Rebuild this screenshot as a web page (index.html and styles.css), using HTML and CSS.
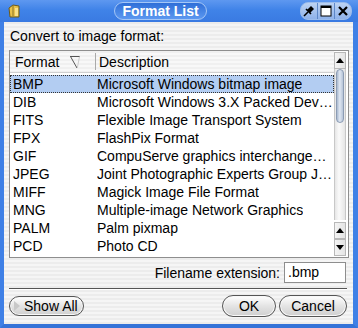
FILE: index.html
```html
<!DOCTYPE html>
<html lang="en">
<head>
    <meta charset="UTF-8">
    <title>Format List</title>
    <link rel="stylesheet" href="styles.css">
</head>
<body>
    <div class="window">
        <div class="titlebar">
            <svg class="app-icon" width="14" height="14" viewBox="0 0 14 14">
                <path d="M2 4 L6 1 L12 2 L12 13 L3 13 Z" fill="#e8c14a" stroke="#6b5a1e" stroke-width="1"/>
                <path d="M6 1 L6 12" stroke="#8a7426" stroke-width="1"/>
                <rect x="8" y="4" width="3" height="8" fill="#f7e08a"/>
            </svg>
            <div class="title-wrap">
                <div class="title">Format List</div>
            </div>
            <div class="win-buttons">
                <span class="wbtn">
                    <svg width="12" height="12" viewBox="0 0 12 12">
                        <path d="M1 11 L5 7" stroke="#000" stroke-width="1.6"/>
                        <path d="M4 5 L7 8 L11 4 L8 1 Z" fill="#000"/>
                        <path d="M3 4 L8 9" stroke="#000" stroke-width="1.6"/>
                    </svg>
                </span>
                <span class="wbtn">
                    <svg width="12" height="12" viewBox="0 0 12 12">
                        <rect x="1" y="1" width="10" height="10" fill="#fff" stroke="#000" stroke-width="1"/>
                        <rect x="1" y="1" width="10" height="2" fill="#000"/>
                    </svg>
                </span>
                <span class="wbtn">
                    <svg width="12" height="12" viewBox="0 0 12 12">
                        <path d="M2 2 L10 10 M10 2 L2 10" stroke="#000" stroke-width="2.2"/>
                    </svg>
                </span>
            </div>
        </div>

        <div class="content">
            <div class="label">Convert to image format:</div>

            <div class="list">
                <div class="list-main">
                    <div class="list-header">
                        <div class="col-format">Format
                            <svg class="sort" width="12" height="14" viewBox="0 0 12 14">
                                <path d="M1 1.5 L11 1.5" stroke="#555" stroke-width="1"/>
                                <path d="M1.5 1.5 L8 13" stroke="#555" stroke-width="1"/>
                                <path d="M10.5 1.5 L8.5 12" stroke="#ccc" stroke-width="1"/>
                            </svg>
                        </div>
                        <div class="col-desc">Description</div>
                    </div>
                    <div class="rows">
                        <div class="row selected"><span class="c1">BMP</span><span class="c2">Microsoft Windows bitmap image</span></div>
                        <div class="row"><span class="c1">DIB</span><span class="c2">Microsoft Windows 3.X Packed Dev…</span></div>
                        <div class="row"><span class="c1">FITS</span><span class="c2">Flexible Image Transport System</span></div>
                        <div class="row"><span class="c1">FPX</span><span class="c2">FlashPix Format</span></div>
                        <div class="row"><span class="c1">GIF</span><span class="c2">CompuServe graphics interchange…</span></div>
                        <div class="row"><span class="c1">JPEG</span><span class="c2">Joint Photographic Experts Group J…</span></div>
                        <div class="row"><span class="c1">MIFF</span><span class="c2">Magick Image File Format</span></div>
                        <div class="row"><span class="c1">MNG</span><span class="c2">Multiple-image Network Graphics</span></div>
                        <div class="row"><span class="c1">PALM</span><span class="c2">Palm pixmap</span></div>
                        <div class="row"><span class="c1">PCD</span><span class="c2">Photo CD</span></div>
                    </div>
                </div>
                <div class="scrollbar">
                    <div class="sb-btn"><span class="arrow-up"></span></div>
                    <div class="sb-track">
                        <div class="sb-thumb"></div>
                    </div>
                    <div class="sb-btn"><span class="arrow-up"></span></div>
                    <div class="sb-btn"><span class="arrow-down"></span></div>
                </div>
            </div>

            <div class="ext-row">
                <span>Filename extension:</span>
                <div class="ext-input">.bmp</div>
            </div>

            <div class="separator"></div>

            <div class="buttons">
                <div class="btn show-all"><span class="tri"></span>Show All</div>
                <div class="spacer"></div>
                <div class="btn ok">OK</div>
                <div class="btn cancel">Cancel</div>
            </div>
        </div>
    </div>
</body>
</html>
```

FILE: styles.css
```css
body {
    margin: 0;
    font-family: "Liberation Sans", Arial, sans-serif;
    font-size: 14px;
    color: #000;
}
.window {
    width: 358px;
    height: 328px;
    box-sizing: border-box;
    background: #3d7be0;
    border-left: 4px solid #3f80e6;
    border-right: 5px solid #3f80e6;
    border-bottom: 4px solid #3573d8;
    display: flex;
    flex-direction: column;
}
.titlebar {
    height: 22px;
    display: flex;
    align-items: center;
    background: linear-gradient(#5e98f0, #4083e8 45%, #3a7ae2);
    margin: 0 -5px 0 -4px;
    padding: 0 6px 0 7px;
}
.app-icon {
    flex: none;
}
.title-wrap {
    flex: 1;
    display: flex;
    justify-content: center;
}
.title {
    color: #fff;
    font-weight: bold;
    font-size: 14px;
    padding: 0 7px;
    height: 16px;
    line-height: 16px;
    border-radius: 9px;
    background: linear-gradient(#2f6fd8, #5c98f0);
    border: 1px solid #a4c6f6;
}
.win-buttons {
    display: flex;
    height: 16px;
    border-radius: 8px;
    overflow: hidden;
    border: 1px solid #9cbcec;
    background: linear-gradient(#bcd2f2, #8fb2ea);
}
.wbtn {
    width: 16px;
    height: 16px;
    display: flex;
    align-items: center;
    justify-content: center;
    border-left: 1px solid #5d87c8;
}
.wbtn:first-child {
    border-left: none;
}
.content {
    flex: 1;
    background: repeating-linear-gradient(#ececec 0, #ececec 2px, #f5f5f5 2px, #f5f5f5 4px);
    padding: 6px 4px 0 5px;
    display: flex;
    flex-direction: column;
}
.label {
    height: 16px;
    line-height: 16px;
    padding-left: 1px;
    margin-bottom: 6px;
}
.list {
    height: 208px;
    box-sizing: border-box;
    border: 1px solid #8e8e8e;
    background: #fff;
    display: flex;
}
.list-main {
    flex: 1;
    display: flex;
    flex-direction: column;
}
.list-header {
    height: 21px;
    display: flex;
    align-items: center;
    background: repeating-linear-gradient(#f0f0f0 0, #f0f0f0 2px, #f8f8f8 2px, #f8f8f8 4px);
    border-bottom: 1px solid #d0d0d0;
    margin-bottom: 2px;
}
.col-format {
    width: 80px;
    padding-left: 5px;
    display: flex;
    align-items: center;
    border-right: 1px solid #aaa;
    height: 17px;
}
.sort {
    margin-left: 10px;
}
.col-desc {
    padding-left: 3px;
}
.row {
    height: 18px;
    line-height: 16px;
    display: flex;
    white-space: nowrap;
    border: 1px solid transparent;
    box-sizing: border-box;
}
.row.selected {
    background: #b3cdf2;
    border: 1px dotted #333;
}
.c1 {
    width: 84px;
    padding-left: 2px;
}
.c2 {
    overflow: hidden;
}
.scrollbar {
    width: 17px;
    margin: 1px 2px 1px 0;
    display: flex;
    flex-direction: column;
}
.sb-btn {
    height: 15px;
    border: 1px solid #b8b8b8;
    background: linear-gradient(to right, #f4f4f4, #e4e4e4);
    display: flex;
    align-items: center;
    justify-content: center;
}
.arrow-up {
    width: 0;
    height: 0;
    border-left: 4px solid transparent;
    border-right: 4px solid transparent;
    border-bottom: 5px solid #000;
}
.arrow-down {
    width: 0;
    height: 0;
    border-left: 4px solid transparent;
    border-right: 4px solid transparent;
    border-top: 5px solid #000;
}
.sb-track {
    flex: 1;
    border-left: 1px solid #c8c8c8;
    border-right: 1px solid #c8c8c8;
    background: linear-gradient(to right, #e6e6e6, #fafafa 40%, #e6e6e6);
    padding: 0 1px;
    margin-bottom: 2px;
}
.sb-thumb {
    height: 52px;
    border-radius: 8px;
    border: 1px solid #8c9cb4;
    background: linear-gradient(to right, #a9b9d0, #dfe7f2 45%, #b6c4d8);
}
.ext-row {
    height: 21px;
    margin-top: 4px;
    display: flex;
    align-items: center;
    justify-content: flex-end;
    padding-right: 3px;
}
.ext-input {
    width: 57px;
    height: 19px;
    line-height: 19px;
    margin-left: 4px;
    border: 1px solid #8e8e8e;
    background: #fff;
    padding-left: 3px;
}
.separator {
    height: 1px;
    background: #555;
    border-bottom: 1px solid #fff;
    margin: 5px 2px 5px 0;
}
.buttons {
    display: flex;
    align-items: center;
    height: 22px;
}
.spacer {
    flex: 1;
}
.btn {
    height: 20px;
    line-height: 20px;
    border: 1px solid #555;
    border-radius: 11px;
    background: linear-gradient(#ffffff, #e4e4e4 50%, #cfcfcf);
    box-shadow: inset 0 0 0 1px #f8f8f8;
    display: flex;
    align-items: center;
    justify-content: center;
}
.show-all {
    width: 75px;
    justify-content: flex-start;
    padding-left: 4px;
    box-sizing: border-box;
}
.tri {
    width: 0;
    height: 0;
    border-top: 5px solid transparent;
    border-bottom: 5px solid transparent;
    border-left: 6px solid #c8c8c8;
    margin-right: 4px;
}
.ok {
    width: 52px;
    margin-right: 3px;
}
.cancel {
    width: 66px;
    margin-right: 2px;
}
```
